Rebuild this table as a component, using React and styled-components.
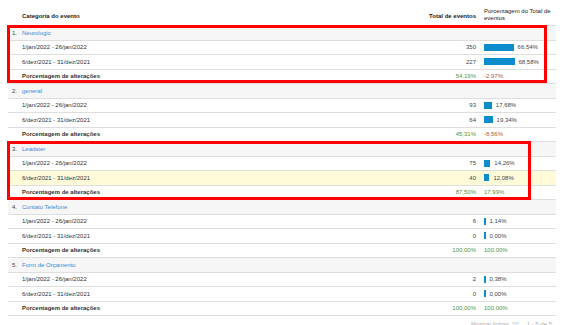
import React from 'react'
import styled, { createGlobalStyle } from 'styled-components'

const GlobalStyle = createGlobalStyle`
    html, body {
        margin: 0;
        padding: 0;
        background: #fff;
        overflow: hidden;
    }
    body {
        font-family: "Liberation Sans", Arial, sans-serif;
        color: #333;
    }
`

const Wrapper = styled.div`
    position: relative;
    width: 566px;
    height: 325px;
    padding-left: 8px;
    box-sizing: border-box;
`

const Table = styled.div`
    width: 548px;
`

const Row = styled.div`
    display: grid;
    grid-template-columns: 1fr 60px 72px;
    column-gap: 8px;
    align-items: center;
    height: 14.5px;
    box-sizing: border-box;
    border-bottom: 1px solid #dedede;
    background: ${({ tone }) =>
        tone === 'group' ? '#f6f6f6' : tone === 'hl' ? '#fffbd9' : '#fff'};
    font-size: 6px;
    line-height: 1;
`

const HeaderRow = styled.div`
    display: grid;
    grid-template-columns: 1fr 60px 72px;
    column-gap: 8px;
    align-items: end;
    height: 26px;
    padding-bottom: 3px;
    box-sizing: border-box;
    border-bottom: 1px solid #dedede;
    font-size: 6px;
    font-weight: bold;
    color: #222;
`

const HeadCell = styled.div`
    text-align: ${({ right }) => (right ? 'right' : 'left')};
    padding-left: ${({ indent }) => indent || 0}px;
    padding-bottom: ${({ lift }) => lift || 0}px;
    line-height: 7px;
    font-weight: ${({ light }) => (light ? 'normal' : 'bold')};
`

const Label = styled.div`
    display: flex;
    align-items: center;
    padding-left: ${({ indent }) => indent}px;
    font-weight: ${({ bold }) => (bold ? 'bold' : 'normal')};
    color: #333;
    white-space: nowrap;
`

const Num = styled.span`
    width: 10px;
    color: #444;
`

const Link = styled.span`
    color: #3a8ad6;
`

const Value = styled.div`
    text-align: right;
    color: ${({ color }) => color || '#444'};
`

const PctCell = styled.div`
    display: flex;
    align-items: center;
    gap: 4px;
    color: ${({ color }) => color || '#444'};
    white-space: nowrap;
`

const Bar = styled.span`
    display: inline-block;
    height: 7px;
    background: #0b8ccc;
    flex: none;
`

const Footer = styled.div`
    display: flex;
    justify-content: flex-end;
    gap: 8px;
    padding: 5px 14px 0 0;
    font-size: 6px;
    color: #b0b0b0;
`

const Highlight = styled.div`
    position: absolute;
    left: ${({ x }) => x}px;
    top: ${({ y }) => y}px;
    width: ${({ w }) => w}px;
    height: ${({ h }) => h}px;
    border: 3px solid #f00;
    box-sizing: border-box;
    pointer-events: none;
`

const GREEN = '#5a9134'
const RED = '#b5572f'

const groups = [
    { n: 1, name: 'Neurologic', a: ['350', 66.54], b: ['227', 68.58], ch: ['54,19%', '-2,97%'] },
    { n: 2, name: 'general', a: ['93', 17.68], b: ['64', 19.34], ch: ['45,31%', '-8,56%'] },
    { n: 3, name: 'Leadster', a: ['75', 14.26], b: ['40', 12.08], ch: ['87,50%', '17,99%'], hl: true },
    { n: 4, name: 'Contato Telefone', a: ['6', 1.14], b: ['0', 0], ch: ['100,00%', '100,00%'] },
    { n: 5, name: 'Form de Orçamento', a: ['2', 0.38], b: ['0', 0], ch: ['100,00%', '100,00%'] },
]

const fmt = v => v.toFixed(2).replace('.', ',') + '%'

const DataRow = ({ label, data, tone }) => (
    <Row tone={tone}>
        <Label indent={14}>{label}</Label>
        <Value>{data[0]}</Value>
        <PctCell>
            <Bar style={{ width: Math.max(1.5, data[1] * 0.445) + 'px' }} />
            {fmt(data[1])}
        </PctCell>
    </Row>
)

export default function App() {
    return (
        <Wrapper>
            <GlobalStyle />
            <Table>
                <HeaderRow>
                    <HeadCell indent={14} lift={2}>Categoria do evento</HeadCell>
                    <HeadCell right lift={2}>Total de eventos</HeadCell>
                    <HeadCell light>Porcentagem do Total de eventos</HeadCell>
                </HeaderRow>
                {groups.map(g => (
                    <React.Fragment key={g.n}>
                        <Row tone="group">
                            <Label indent={4}>
                                <Num>{g.n}.</Num>
                                <Link>{g.name}</Link>
                            </Label>
                            <div />
                            <div />
                        </Row>
                        <DataRow label="1/jan/2022 - 26/jan/2022" data={g.a} />
                        <DataRow label="6/dez/2021 - 31/dez/2021" data={g.b} tone={g.hl ? 'hl' : undefined} />
                        <Row>
                            <Label indent={14} bold>Porcentagem de alterações</Label>
                            <Value color={GREEN}>{g.ch[0]}</Value>
                            <PctCell color={g.ch[1].startsWith('-') ? RED : GREEN}>{g.ch[1]}</PctCell>
                        </Row>
                    </React.Fragment>
                ))}
            </Table>
            <Footer>
                <span>Mostrar linhas: 10</span>
                <span>1 - 5 de 5</span>
            </Footer>
            <Highlight x={7} y={25} w={540} h={58} />
            <Highlight x={7} y={141} w={524} h={59} />
        </Wrapper>
    )
}
